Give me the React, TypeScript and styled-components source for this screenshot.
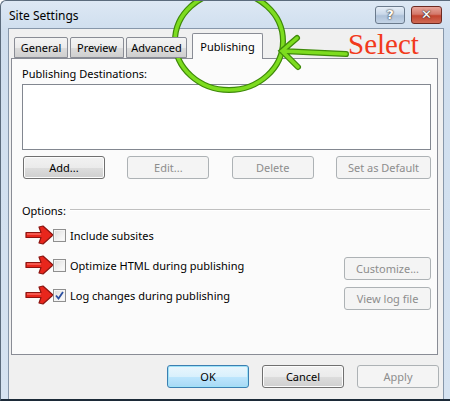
import React from "react";
import styled, { createGlobalStyle } from "styled-components";

const Global = createGlobalStyle`
  html, body { margin: 0; padding: 0; background: #fff; }
  body { font-family: "Noto Sans", "DejaVu Sans", sans-serif; font-size: 11px; color: #000; }
`;

const Window = styled.div`
  position: relative;
  width: 450px;
  height: 401px;
  box-sizing: border-box;
  overflow: hidden;
  display: flex;
  flex-direction: column;
  background: linear-gradient(180deg, #dde8f4 0px, #cfdeee 30px, #d6e3f1 100%);
  border-left: 1px solid #5b6b7c;
  border-top: 1px solid #5b6b7c;
  border-bottom: 2px solid #1c2a38;
  border-top-left-radius: 6px;
`;

const TitleBar = styled.div`
  height: 27px;
  flex: none;
  display: flex;
  align-items: center;
  padding: 0 8px 0 8px;
`;

const Title = styled.div`
  flex: 1;
  font-size: 12px;
  color: #000;
  padding-top: 1px;
`;

const CaptionButton = styled.div<{ $close?: boolean }>`
  width: ${(p) => (p.$close ? 31 : 30)}px;
  height: 18px;
  box-sizing: border-box;
  margin-left: ${(p) => (p.$close ? 6 : 0)}px;
  border: 1px solid ${(p) => (p.$close ? "#6d2a22" : "#6a7a8c")};
  border-radius: 3px;
  display: flex;
  align-items: center;
  justify-content: center;
  color: #fff;
  font-weight: bold;
  font-size: 13px;
  font-family: "DejaVu Sans", sans-serif;
  text-shadow: 0 0 2px #333, 0 0 1px #222;
  background: ${(p) =>
    p.$close
      ? "linear-gradient(180deg, #e8a59a 0%, #d3786a 45%, #c3442f 55%, #cf6a55 100%)"
      : "linear-gradient(180deg, #e6eef7 0%, #c9d8e9 45%, #aec2d9 55%, #c4d4e6 100%)"};
`;

const Client = styled.div`
  flex: 1;
  margin: 0 6px 0 7px;
  background: #f0f0f0;
  border: 1px solid #8797aa;
  border-bottom: none;
  display: flex;
  flex-direction: column;
  padding: 4px 5px 0 2px;
`;

const TabStrip = styled.div`
  display: flex;
  align-items: flex-end;
  padding-left: 3px;
  gap: 2px;
  height: 25px;
  position: relative;
  z-index: 1;
`;

const Tab = styled.div<{ $active?: boolean; $w: number }>`
  width: ${(p) => p.$w}px;
  box-sizing: border-box;
  height: ${(p) => (p.$active ? 26 : 21)}px;
  margin-bottom: ${(p) => (p.$active ? -1 : 0)}px;
  margin-left: ${(p) => (p.$active ? 3 : 0)}px;
  border: 1px solid #898c95;
  border-bottom: ${(p) => (p.$active ? "none" : "1px solid #898c95")};
  border-radius: 2px 2px 0 0;
  background: ${(p) =>
    p.$active ? "#fbfbfb" : "linear-gradient(180deg, #f4f4f4 0%, #ebebeb 50%, #dcdcdc 51%, #cfcfcf 100%)"};
  display: flex;
  align-items: ${(p) => (p.$active ? "flex-start" : "center")};
  padding-top: ${(p) => (p.$active ? 5 : 0)}px;
  justify-content: center;
  font-size: 11px;
`;

const Panel = styled.div`
  height: 295px;
  border: 1px solid #898c95;
  background: #fbfbfb;
  padding: 0 6px 0 10px;
  display: flex;
  flex-direction: column;
`;

const Label = styled.div`
  height: 16px;
  line-height: 16px;
  margin-top: 7px;
`;

const ListBox = styled.div`
  margin-top: 2px;
  height: 66px;
  box-sizing: border-box;
  border: 1px solid #828790;
  background: #fff;
`;

const ButtonRow = styled.div`
  display: flex;
  justify-content: space-between;
  margin-top: 6px;
  padding-left: 1px;
`;

const Button = styled.div<{ $w?: number; $disabled?: boolean; $default?: boolean; $drop?: number }>`
  width: ${(p) => p.$w ?? 82}px;
  height: 23px;
  flex: none;
  box-sizing: border-box;
  border-radius: 3px;
  margin-top: ${(p) => p.$drop ?? 0}px;
  display: flex;
  align-items: center;
  justify-content: center;
  font-size: 11px;
  color: ${(p) => (p.$disabled ? "#8d8d8d" : "#000")};
  border: 1px solid ${(p) => (p.$disabled ? "#adb2b5" : p.$default ? "#3c7fb1" : "#707070")};
  background: ${(p) =>
    p.$disabled
      ? "#f4f4f4"
      : p.$default
      ? "linear-gradient(180deg, #eaf6fd 0%, #d9f0fc 50%, #bee6fd 51%, #a7d9f5 100%)"
      : "linear-gradient(180deg, #f2f2f2 0%, #ebebeb 50%, #dddddd 51%, #cfcfcf 100%)"};
  box-shadow: ${(p) => (p.$default ? "inset 0 0 0 1px #9ee2f8" : p.$disabled ? "none" : "inset 0 0 0 1px #fcfcfc")};
`;

const GroupHeader = styled.div`
  display: flex;
  align-items: center;
  margin-top: 23px;
  height: 16px;
  gap: 4px;
`;

const Rule = styled.div`
  flex: 1;
  height: 1px;
  background: #c0c0c0;
  border-bottom: 1px solid #fff;
  margin-right: 1px;
`;

const Options = styled.div`
  display: flex;
  flex-direction: column;
  margin-top: 2px;
`;

const OptionRow = styled.div`
  display: flex;
  align-items: center;
  height: 30px;
  margin-left: 2px;
`;

const Arrow = styled.svg`
  width: 31px;
  height: 22px;
  flex: none;
  margin-right: -2px;
`;

const Check = styled.div`
  width: 13px;
  height: 13px;
  box-sizing: border-box;
  border: 1px solid #8f8f8f;
  background: linear-gradient(135deg, #dcdcdc 0%, #f2f2f2 60%, #fdfdfd 100%);
  box-shadow: inset 0 0 0 1px #f4f4f4;
  display: flex;
  align-items: center;
  justify-content: center;
  flex: none;
`;

const OptionText = styled.div`
  margin-left: 4px;
  flex: 1;
`;

const Footer = styled.div`
  flex: 1;
  display: flex;
  justify-content: flex-end;
  align-items: flex-start;
  padding-top: 10px;
  gap: 13px;
  margin-right: -1px;
`;

const Annotation = styled.svg`
  position: absolute;
  left: 0;
  top: 0;
  pointer-events: none;
`;

const SelectText = styled.div`
  position: absolute;
  left: 347px;
  top: 26px;
  font-family: "Liberation Serif", "Times New Roman", serif;
  font-size: 29px;
  color: #f23a1c;
  line-height: 34px;
`;

const RedArrow = () => (
  <Arrow viewBox="0 0 31 22">
    <path
      d="M2 8.5 L17 8.5 L15 3 L19 2 L29 11 L19 20 L15 19 L17 13.5 L2 13.5 Z"
      fill="#e8261c"
      stroke="#8c1410"
      strokeWidth="1.2"
      strokeLinejoin="round"
    />
    <path d="M3 10 L17 10" stroke="#ff8a80" strokeWidth="1" />
  </Arrow>
);

const CheckMark = () => (
  <svg width="9" height="9" viewBox="0 0 9 9">
    <path d="M1 4.5 L3.5 7.5 L8 1" fill="none" stroke="#2b4fa0" strokeWidth="1.8" />
  </svg>
);

export default function App() {
  const opts = [
    { text: "Include subsites", checked: false, btn: null as string | null },
    { text: "Optimize HTML during publishing", checked: false, btn: "Customize..." },
    { text: "Log changes during publishing", checked: true, btn: "View log file" },
  ];
  return (
    <>
      <Global />
      <Window>
        <TitleBar>
          <Title>Site Settings</Title>
          <CaptionButton>?</CaptionButton>
          <CaptionButton $close>✕</CaptionButton>
        </TitleBar>
        <Client>
          <TabStrip>
            <Tab $w={54}>General</Tab>
            <Tab $w={54}>Preview</Tab>
            <Tab $w={61}>Advanced</Tab>
            <Tab $w={71} $active>Publishing</Tab>
          </TabStrip>
          <Panel>
            <Label>Publishing Destinations:</Label>
            <ListBox />
            <ButtonRow>
              <Button>Add...</Button>
              <Button $disabled>Edit...</Button>
              <Button $disabled>Delete</Button>
              <Button $disabled $w={95}>Set as Default</Button>
            </ButtonRow>
            <GroupHeader>
              <span>Options:</span>
              <Rule />
            </GroupHeader>
            <Options>
              {opts.map((o) => (
                <OptionRow key={o.text}>
                  <RedArrow />
                  <Check>{o.checked && <CheckMark />}</Check>
                  <OptionText>{o.text}</OptionText>
                  {o.btn && (
                    <Button $disabled $w={87} $drop={7}>
                      {o.btn}
                    </Button>
                  )}
                </OptionRow>
              ))}
            </Options>
          </Panel>
          <Footer>
            <Button $default>OK</Button>
            <Button>Cancel</Button>
            <Button $disabled>Apply</Button>
          </Footer>
        </Client>
        <Annotation width="450" height="401" viewBox="0 0 450 401">
          <g fill="none" strokeLinecap="round">
            <ellipse cx="228" cy="40" rx="54" ry="49" stroke="#3f8a0a" strokeWidth="6" />
            <ellipse cx="228" cy="40" rx="54" ry="49" stroke="#7ddc1f" strokeWidth="3.5" />
            <path d="M296 37 L281 50 L297 66 M281 50 L345 53" stroke="#3f8a0a" strokeWidth="6" />
            <path d="M296 37 L281 50 L297 66 M281 50 L345 53" stroke="#7ddc1f" strokeWidth="3.5" />
          </g>
        </Annotation>
        <SelectText>Select</SelectText>
      </Window>
    </>
  );
}
